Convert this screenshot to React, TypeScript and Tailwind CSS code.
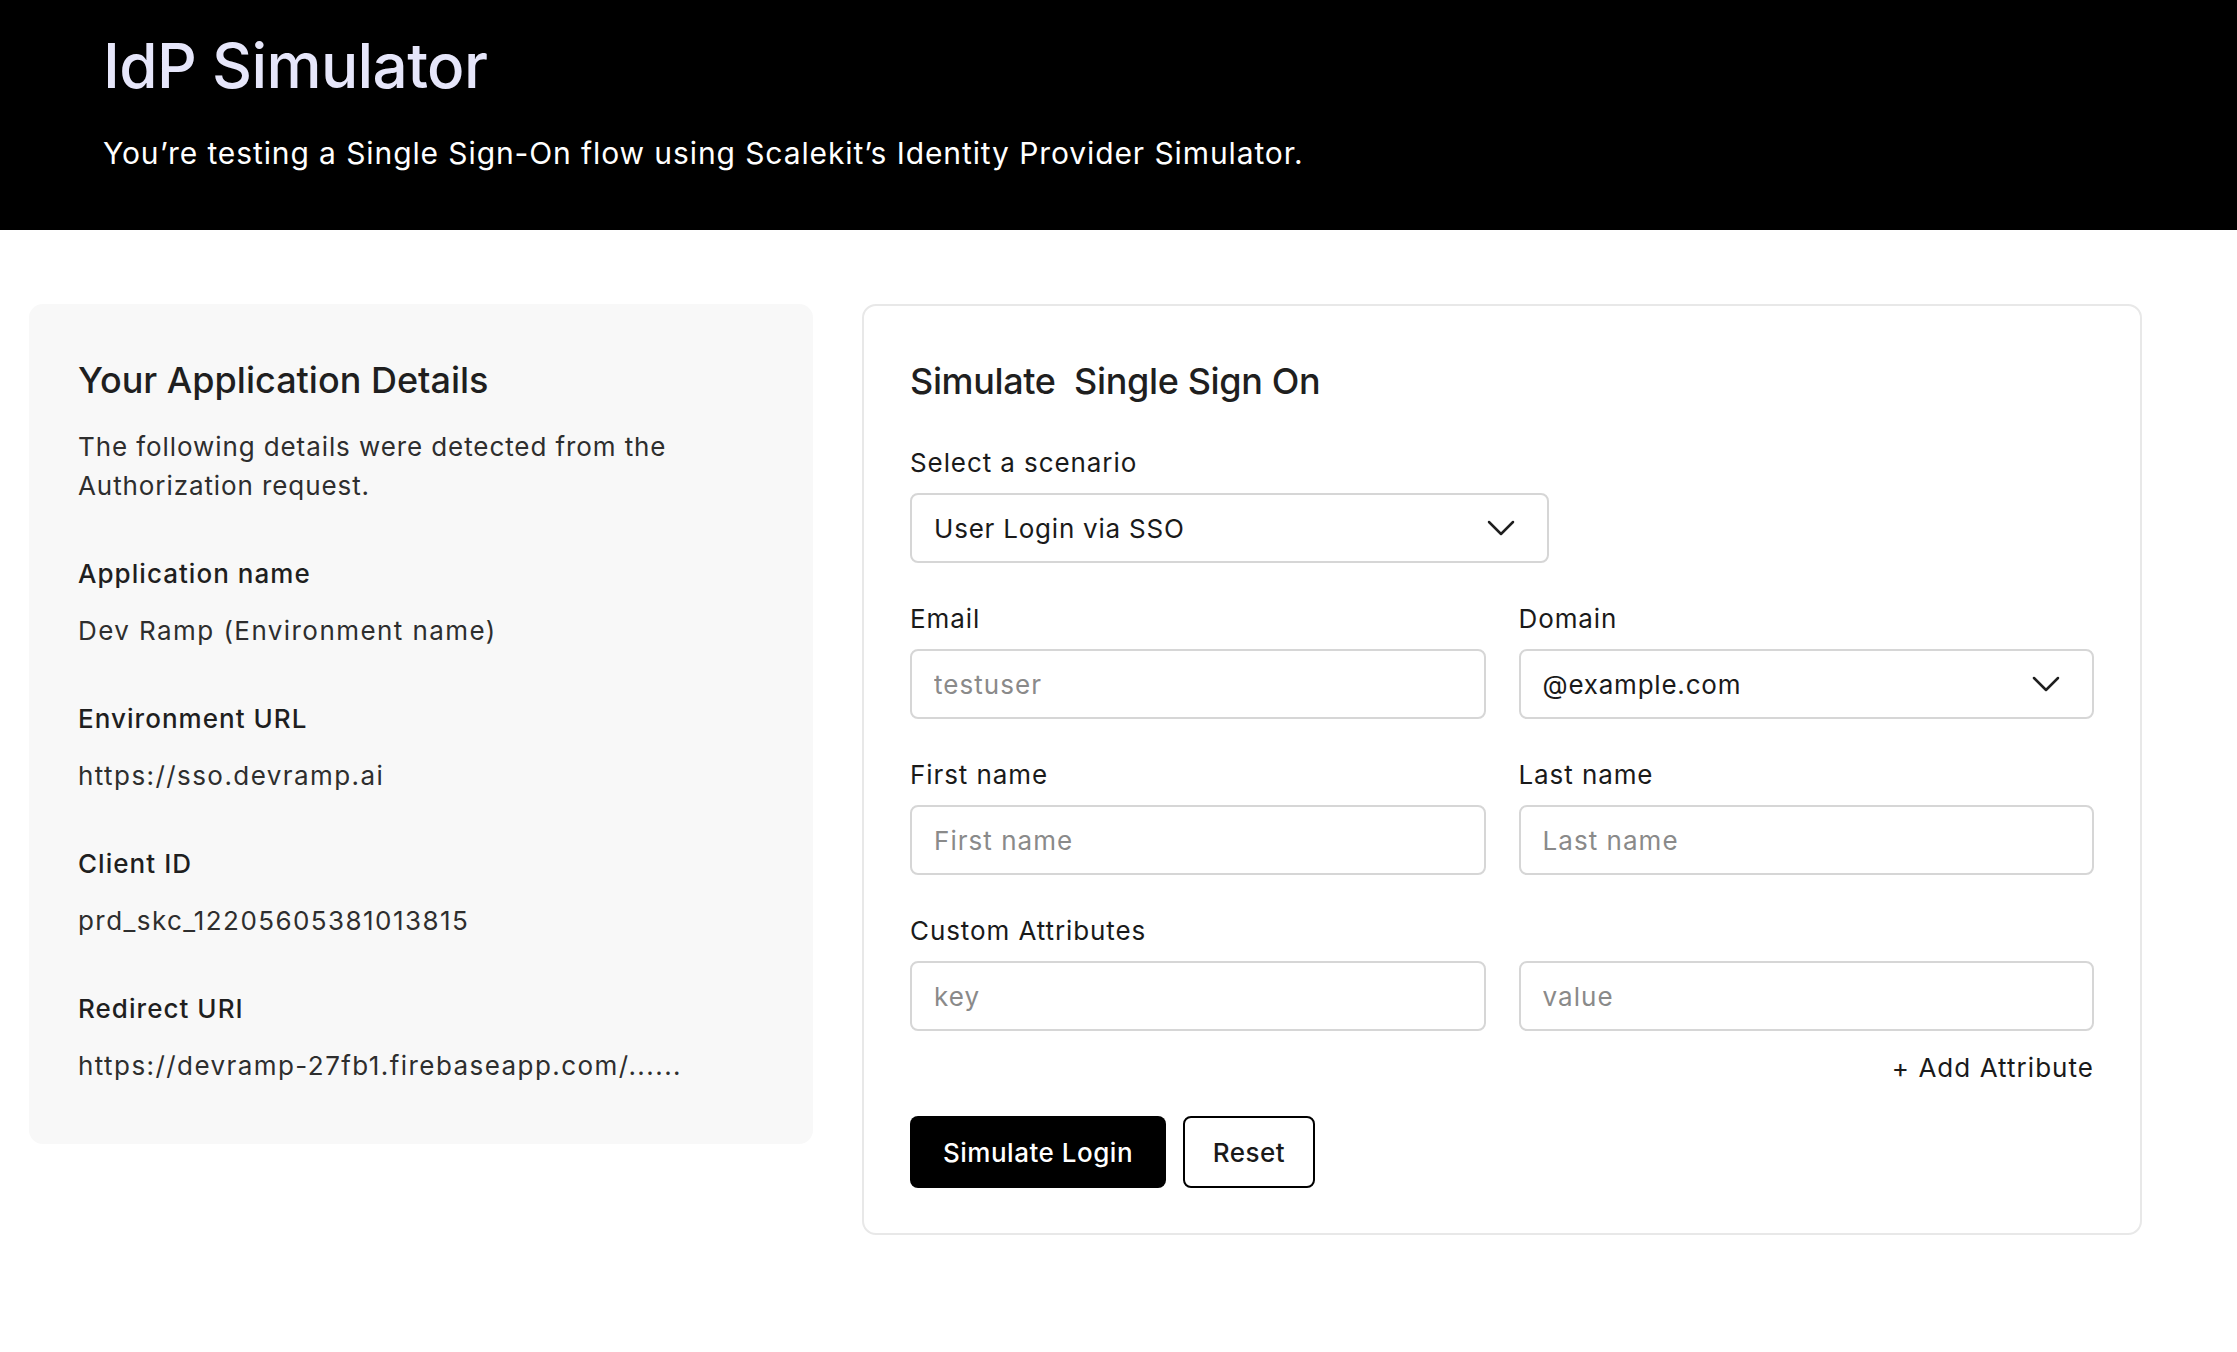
import React from 'react';

const font = { fontFamily: 'Inter, "Noto Sans", sans-serif' };

const Chevron: React.FC = () => (
  <svg width="28" height="16" viewBox="0 0 28 16" fill="none" className="shrink-0">
    <polyline points="2,2 14,14 26,2" stroke="#1f1f1f" strokeWidth="2.5" strokeLinecap="round" strokeLinejoin="round" />
  </svg>
);

const DetailItem: React.FC<{ label: string; value: string }> = ({ label, value }) => (
  <div className="mt-[49px]">
    <div className="text-[26px] leading-[39px] font-medium tracking-[0.04em] text-[#1f1f1f]">{label}</div>
    <div className="mt-[18px] text-[26px] leading-[39px] tracking-[0.055em] text-[#2e2e2e]">{value}</div>
  </div>
);

const FieldLabel: React.FC<{ children: React.ReactNode }> = ({ children }) => (
  <div className="text-[26px] leading-[39px] tracking-[0.035em] text-[#1a1a1a] mb-[11px]">{children}</div>
);

const TextInput: React.FC<{ placeholder: string }> = ({ placeholder }) => (
  <input
    type="text"
    placeholder={placeholder}
    className="w-full h-[70px] rounded-[8px] border-2 border-[#d6d6d6] bg-white px-[22px] text-[26px] tracking-[0.04em] text-[#1a1a1a] placeholder:text-[#8a8a8a] outline-none"
  />
);

const SelectBox: React.FC<{ value: string; className?: string }> = ({ value, className }) => (
  <div
    className={`h-[70px] rounded-[8px] border-2 border-[#d6d6d6] bg-white pl-[22px] pr-[32px] flex items-center justify-between ${className ?? ''}`}
  >
    <span className="text-[26px] tracking-[0.03em] text-[#1a1a1a]">{value}</span>
    <Chevron />
  </div>
);

const App: React.FC = () => {
  return (
    <div className="min-h-screen bg-white" style={font}>
      <header className="h-[230px] bg-black px-[103px] pt-[35px]">
        <h1 className="text-[62px] leading-none font-medium tracking-[-0.01em] text-[#e6e6fa]">IdP Simulator</h1>
        <p className="mt-[41px] text-[30px] leading-none tracking-[0.03em] text-white">
          You’re testing a Single Sign-On flow using Scalekit’s Identity Provider Simulator.
        </p>
      </header>

      <main className="flex items-start gap-[49px] pl-[29px] mt-[74px]">
        <section className="w-[784px] bg-[#f8f8f8] rounded-[14px] px-[49px] pt-[54px] pb-[59px]">
          <h2 className="text-[36px] leading-[44px] font-medium text-[#1f1f1f]">Your Application Details</h2>
          <p className="mt-[25px] text-[26px] leading-[39px] tracking-[0.035em] text-[#2e2e2e]">
            The following details were detected from the Authorization request.
          </p>
          <DetailItem label="Application name" value="Dev Ramp (Environment name)" />
          <DetailItem label="Environment URL" value="https://sso.devramp.ai" />
          <DetailItem label="Client ID" value="prd_skc_12205605381013815" />
          <DetailItem label="Redirect URI" value="https://devramp-27fb1.firebaseapp.com/......" />
        </section>

        <section className="w-[1280px] border-2 border-[#e8e8e8] rounded-[14px] px-[46px] pt-[53px] pb-[45px]">
          <h2 className="text-[36px] leading-[44px] font-medium tracking-[-0.01em] text-[#1f1f1f]">Simulate&nbsp; Single Sign On</h2>

          <div className="mt-[40px]">
            <FieldLabel>Select a scenario</FieldLabel>
            <SelectBox value="User Login via SSO" className="w-[639px]" />
          </div>

          <div className="grid grid-cols-2 gap-x-[33px] gap-y-[36px] mt-[36px]">
            <div>
              <FieldLabel>Email</FieldLabel>
              <TextInput placeholder="testuser" />
            </div>
            <div>
              <FieldLabel>Domain</FieldLabel>
              <SelectBox value="@example.com" />
            </div>
            <div>
              <FieldLabel>First name</FieldLabel>
              <TextInput placeholder="First name" />
            </div>
            <div>
              <FieldLabel>Last name</FieldLabel>
              <TextInput placeholder="Last name" />
            </div>
          </div>

          <div className="mt-[36px]">
            <FieldLabel>Custom Attributes</FieldLabel>
            <div className="grid grid-cols-2 gap-x-[33px]">
              <TextInput placeholder="key" />
              <TextInput placeholder="value" />
            </div>
            <div className="flex justify-end mt-[17px]">
              <button className="text-[26px] leading-[39px] tracking-[0.04em] text-[#1a1a1a]">+ Add Attribute</button>
            </div>
          </div>

          <div className="flex gap-[17px] mt-[29px]">
            <button className="h-[72px] w-[256px] rounded-[8px] bg-black text-white text-[26px] font-medium tracking-[0.02em]">
              Simulate Login
            </button>
            <button className="h-[72px] w-[132px] rounded-[8px] border-2 border-black bg-white text-[#1a1a1a] text-[26px] font-medium tracking-[0.02em]">
              Reset
            </button>
          </div>
        </section>
      </main>
    </div>
  );
};

export default App;
